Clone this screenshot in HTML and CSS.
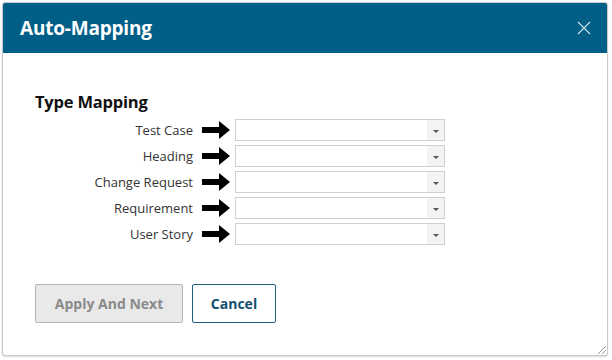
FILE: index.html
```html
<!DOCTYPE html>
<html lang="en">
<head>
    <meta charset="UTF-8">
    <title>Auto-Mapping</title>
    <link rel="stylesheet" href="styles.css">
</head>
<body>
    <div class="dialog">
        <div class="dialog-header">
            <h1>Auto-Mapping</h1>
            <button class="close" aria-label="Close">
                <svg width="14" height="14" viewBox="0 0 14 14"><path d="M1 1L13 13M13 1L1 13" stroke="#c8dbe6" stroke-width="1.2" fill="none"/></svg>
            </button>
        </div>

        <div class="dialog-body">
            <h2>Type Mapping</h2>
            <div class="mapping">
                <div class="row">
                    <span class="label">Test Case</span>
                    <svg class="arrow" width="28" height="18" viewBox="0 0 28 18"><path d="M0 6H17V0L28 9L17 18V12H0Z" fill="#000"/></svg>
                    <div class="select"><span class="caret"></span></div>
                </div>
                <div class="row">
                    <span class="label">Heading</span>
                    <svg class="arrow" width="28" height="18" viewBox="0 0 28 18"><path d="M0 6H17V0L28 9L17 18V12H0Z" fill="#000"/></svg>
                    <div class="select"><span class="caret"></span></div>
                </div>
                <div class="row">
                    <span class="label">Change Request</span>
                    <svg class="arrow" width="28" height="18" viewBox="0 0 28 18"><path d="M0 6H17V0L28 9L17 18V12H0Z" fill="#000"/></svg>
                    <div class="select"><span class="caret"></span></div>
                </div>
                <div class="row">
                    <span class="label">Requirement</span>
                    <svg class="arrow" width="28" height="18" viewBox="0 0 28 18"><path d="M0 6H17V0L28 9L17 18V12H0Z" fill="#000"/></svg>
                    <div class="select"><span class="caret"></span></div>
                </div>
                <div class="row">
                    <span class="label">User Story</span>
                    <svg class="arrow" width="28" height="18" viewBox="0 0 28 18"><path d="M0 6H17V0L28 9L17 18V12H0Z" fill="#000"/></svg>
                    <div class="select"><span class="caret"></span></div>
                </div>
            </div>

            <div class="actions">
                <button class="btn btn-disabled">Apply And Next</button>
                <button class="btn btn-outline">Cancel</button>
            </div>
        </div>
        <div class="grip"></div>
    </div>
</body>
</html>
```

FILE: styles.css
```css
body {
    margin: 0;
    padding: 2px;
    font-family: 'Open Sans', 'Noto Sans', sans-serif;
    background-color: #ffffff;
    color: #222;
}

.dialog {
    position: relative;
    width: 606px;
    height: 354px;
    border: 1px solid #c9c9c9;
    border-radius: 3px;
    box-shadow: 0 1px 2px rgba(0, 0, 0, 0.15);
    box-sizing: border-box;
    background: #fff;
    overflow: hidden;
}

.dialog-header {
    display: flex;
    align-items: center;
    justify-content: space-between;
    height: 50px;
    padding: 0 16px 0 17px;
    background-color: #015f87;
    color: #fff;
}

.dialog-header h1 {
    margin: 0;
    font-size: 19px;
    font-weight: 700;
    letter-spacing: -0.2px;
}

.close {
    background: none;
    border: none;
    padding: 0;
    width: 14px;
    height: 14px;
    cursor: pointer;
}

.close svg {
    display: block;
}

.dialog-body {
    padding: 37px 0 0 32px;
}

h2 {
    margin: 0 0 6px;
    font-size: 16.5px;
    font-weight: 700;
    color: #111;
    letter-spacing: -0.2px;
}

.mapping {
    display: flex;
    flex-direction: column;
    gap: 4px;
}

.row {
    display: flex;
    align-items: center;
    height: 22px;
}

.label {
    width: 158px;
    text-align: right;
    font-size: 13px;
    color: #333;
}

.arrow {
    margin-left: 9px;
    margin-right: 5px;
}

.select {
    position: relative;
    width: 210px;
    height: 22px;
    border: 1px solid #cfcfcf;
    box-sizing: border-box;
    background: #fff;
}

.caret {
    position: absolute;
    top: 0;
    right: 0;
    width: 17px;
    height: 20px;
    background: #f3f3f3;
}

.caret::after {
    content: '';
    position: absolute;
    left: 6px;
    top: 10px;
    border-left: 3px solid transparent;
    border-right: 3px solid transparent;
    border-top: 3px solid #555;
}

.actions {
    display: flex;
    gap: 9px;
    margin-top: 39px;
}

.btn {
    height: 39px;
    padding: 0 17px;
    font-family: inherit;
    font-size: 14px;
    font-weight: 700;
    border-radius: 2px;
    background: #fff;
    cursor: pointer;
}

.btn-disabled {
    width: 148px;
    background: #e9e9e9;
    border: 1px solid #b5b5b5;
    color: #8a8a8a;
    cursor: default;
}

.btn-outline {
    width: 84px;
    border: 1px solid #1f5f80;
    color: #134e6f;
}

.grip {
    position: absolute;
    right: 1px;
    bottom: 1px;
    width: 8px;
    height: 8px;
    background: linear-gradient(135deg, transparent 45%, #999 45%, #999 55%, transparent 55%, transparent 70%, #999 70%, #999 80%, transparent 80%);
}
```
